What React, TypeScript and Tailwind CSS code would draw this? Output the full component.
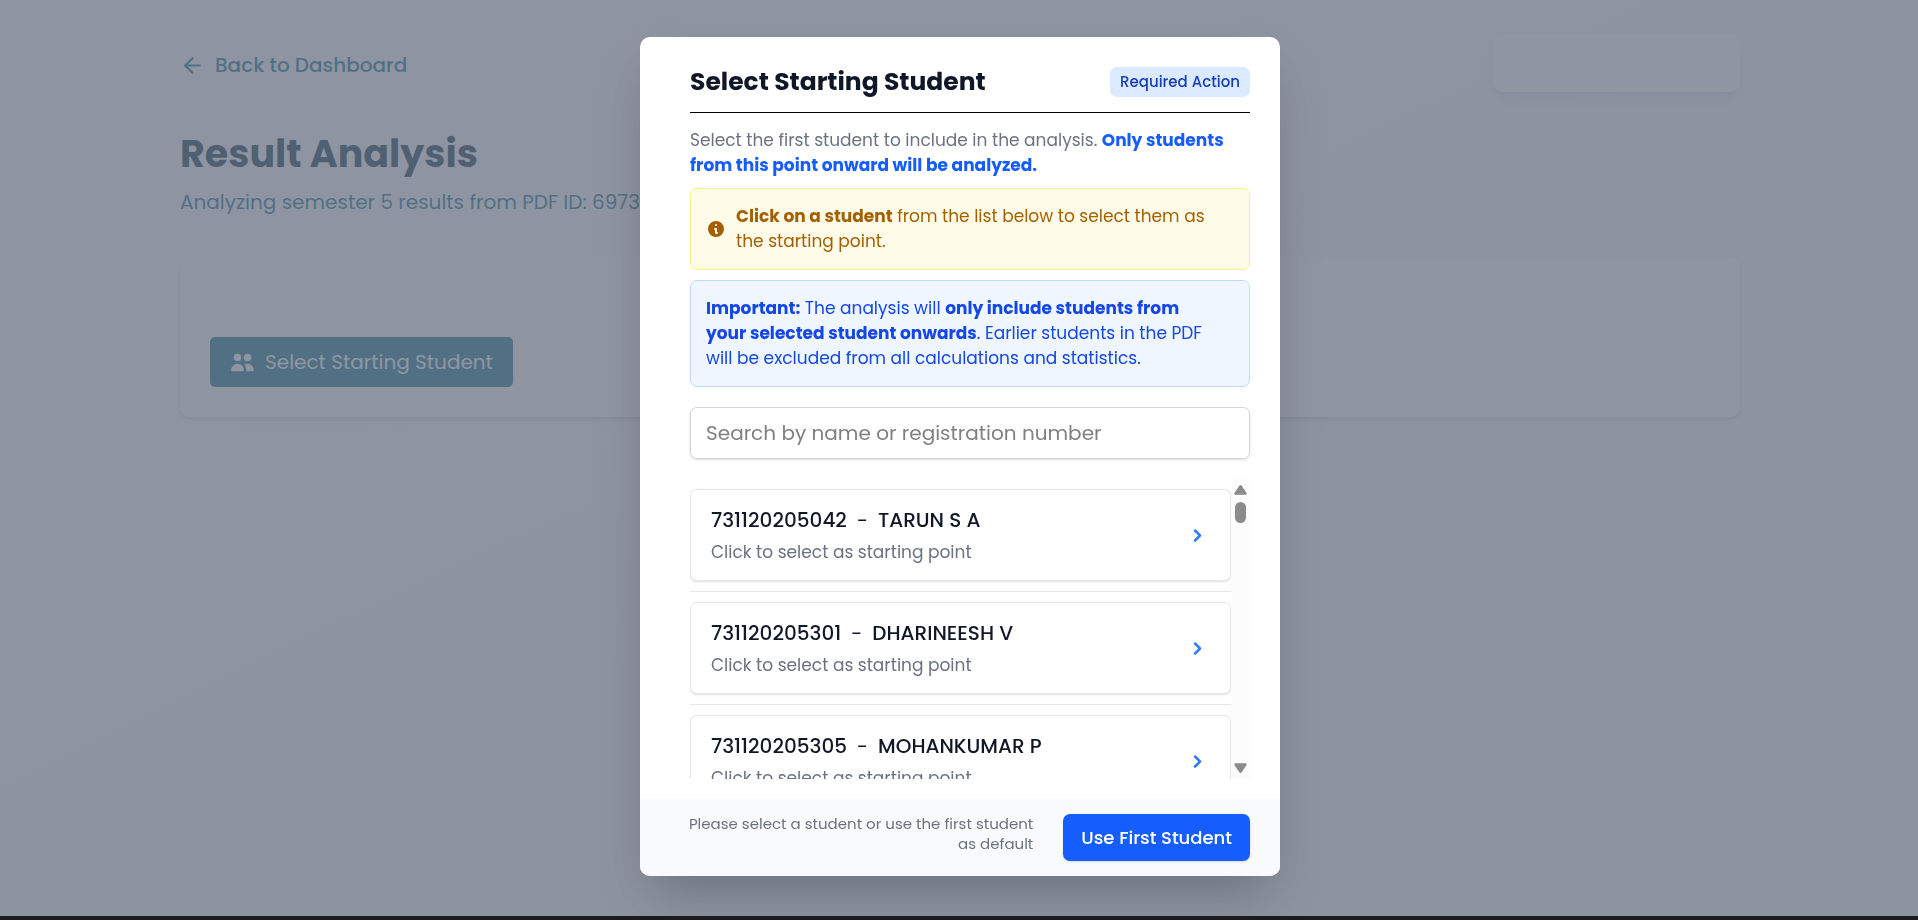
import { ArrowLeft } from "lucide-react"
import { HiChevronRight, HiInformationCircle, HiUsers } from "react-icons/hi"

const students = [
  { regNo: "731120205042", name: "TARUN S A" },
  { regNo: "731120205301", name: "DHARINEESH V" },
  { regNo: "731120205305", name: "MOHANKUMAR P" },
]

function ResultPage() {
  return (
    <div className="mx-auto max-w-[1560px]">
      <div className="flex h-[92px] items-end justify-between">
        <a href="#" className="mb-[14px] flex items-center gap-[10px] text-xl font-medium leading-[25px] text-[#086c8c]">
          <ArrowLeft size={25} />
          Back to Dashboard
        </a>
        <div className="h-[58px] w-[247px] rounded-[10px] bg-white shadow-lg"></div>
      </div>
      <h1 className="mt-[37px] text-[38px] font-bold leading-[50px] text-[#032f44]">Result Analysis</h1>
      <p className="mt-2 text-xl leading-[30px] text-[#086c8c]">
        Analyzing semester 5 results from PDF ID: 6973
      </p>
      <div className="mt-10 rounded-[10px] bg-white px-[30px] pt-20 pb-[30px] shadow-md">
        <button className="flex h-[50px] items-center gap-[10px] rounded-[5px] bg-[#086c8c] px-5 text-xl text-white">
          <HiUsers size={25} />
          Select Starting Student
        </button>
      </div>
    </div>
  )
}

function StudentItem({ regNo, name }: { regNo: string; name: string }) {
  return (
    <li className="border-b border-gray-200 py-[10px]">
      <button className="flex h-[92px] w-full items-center justify-between rounded-[7px] border border-gray-200 bg-white px-5 text-left shadow-sm">
        <span>
          <span className="flex gap-[10px] text-xl font-medium leading-[30px] text-gray-900">
            <span>{regNo}</span>
            <span className="font-normal">-</span>
            <span>{name}</span>
          </span>
          <span className="mt-[5px] block text-[17px] leading-[25px] text-gray-500">Click to select as starting point</span>
        </span>
        <HiChevronRight size={25} className="text-blue-500" />
      </button>
    </li>
  )
}

function ScrollRail() {
  return (
    <div className="flex w-[19px] flex-col items-center bg-[#fcfcfc] py-[5px] text-[#8b8b8b]">
      <svg width="13" height="11" viewBox="0 0 13 11" fill="currentColor">
        <path d="M5.3 1.8Q6.5 .2 7.7 1.8L12.6 9Q13.2 10.8 11.4 10.8H1.6Q-.2 10.8.4 9Z" />
      </svg>
      <div className="mt-[7px] h-[21px] w-[11px] rounded-full bg-[#8b8b8b]"></div>
      <svg className="mt-auto" width="13" height="11" viewBox="0 0 13 11" fill="currentColor">
        <path d="M5.3 9.2Q6.5 10.8 7.7 9.2L12.6 2Q13.2 .2 11.4.2H1.6Q-.2 .2.4 2Z" />
      </svg>
    </div>
  )
}

function StudentModal() {
  return (
    <div role="dialog" aria-labelledby="modal-title" className="w-[640px] max-w-full overflow-hidden rounded-[10px] bg-white shadow-2xl">
      <div className="pt-[30px] pr-[30px] pb-5 pl-[50px]">
        <div className="flex items-center justify-between border-b border-black pb-[15px]">
          <h3 id="modal-title" className="text-[25px] font-bold leading-[30px] text-gray-900">Select Starting Student</h3>
          <span className="rounded-[7px] bg-blue-100 px-[10px] text-[15px] font-medium leading-[30px] text-blue-800">Required Action</span>
        </div>
        <p className="mt-[15px] text-[17px] leading-[25px] text-gray-500">
          Select the first student to include in the analysis.{" "}
          <span className="font-bold text-blue-600">Only students from this point onward will be analyzed.</span>
        </p>
        <div className="mt-[10px] flex items-center gap-[10px] rounded-[7px] border border-yellow-200 bg-yellow-50 p-[15px] text-[17px] leading-[25px] text-yellow-700">
          <HiInformationCircle size={20} className="shrink-0" />
          <p>
            <strong>Click on a student</strong> from the list below to select them as
            <br />
            the starting point.
          </p>
        </div>
        <div className="mt-[10px] rounded-[7px] border border-blue-200 bg-blue-50 p-[15px] text-[17px] leading-[25px] text-blue-700">
          <strong>Important:</strong> The analysis will <strong>only include students from<br />your selected student onwards</strong>.
          Earlier students in the PDF
          <br />
          will be excluded from all calculations and statistics.
        </div>
        <input
          type="text"
          aria-label="Search students"
          placeholder="Search by name or registration number"
          className="mt-5 h-[52px] w-full rounded-[7px] border border-gray-300 px-[15px] text-xl shadow-sm placeholder:text-[#808080]"
        />
        <div className="mt-5 flex h-[300px]">
          <ul className="flex-1 overflow-hidden">
            {students.map((student) => (
              <StudentItem key={student.regNo} {...student} />
            ))}
          </ul>
          <ScrollRail />
        </div>
      </div>
      <div className="flex items-start justify-end gap-[30px] bg-gray-50 py-[15px] pr-[30px] pl-[45px]">
        <p className="text-right text-[15px] leading-5 text-gray-500">
          Please select a student or use the first student
          <br />
          as default
        </p>
        <button className="h-[47px] shrink-0 rounded-[7px] bg-blue-600 px-[18px] text-lg font-medium text-white shadow-sm">Use First Student</button>
      </div>
    </div>
  )
}

export default function App() {
  return (
    <div className="min-h-screen border-b-4 border-[#1c1c1e] bg-linear-to-br from-[#fcfdfe] to-[#f3f7ff] pl-0.5 font-['Poppins','Inter',sans-serif]">
      <ResultPage />
      <div className="fixed inset-x-0 top-0 bottom-1 flex items-start justify-center overflow-hidden bg-gray-500/75 pt-[37px] pl-0.5">
        <StudentModal />
      </div>
    </div>
  )
}
